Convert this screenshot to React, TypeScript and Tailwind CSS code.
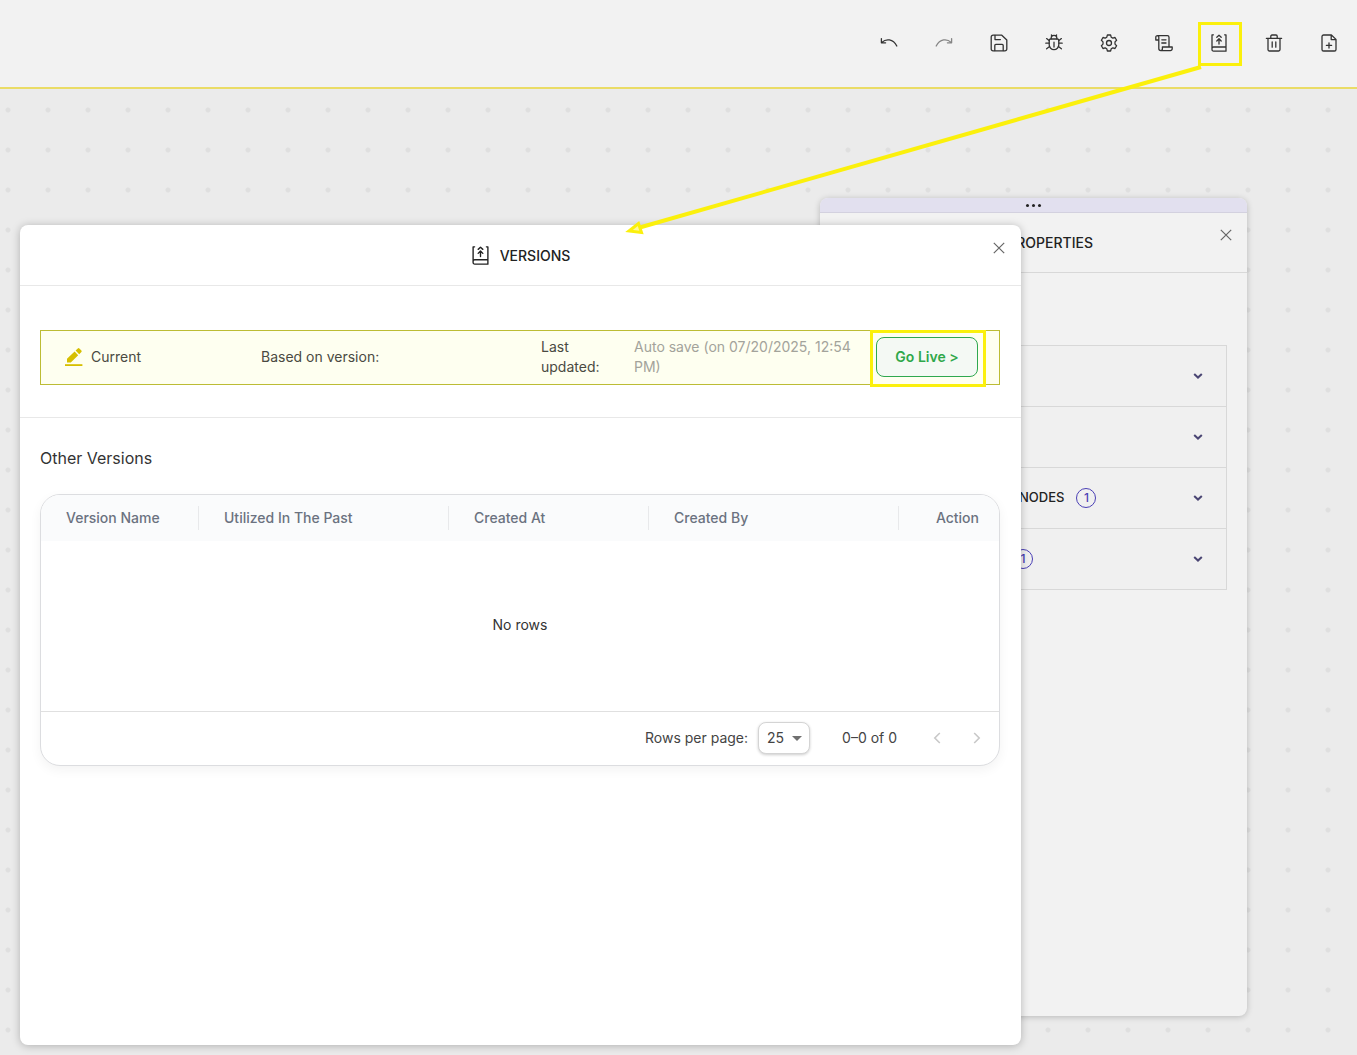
import React from "react";

type IconProps = { className?: string };

function Svg({ className = "size-[18px]", children }: React.PropsWithChildren<IconProps>) {
  return (
    <svg viewBox="0 0 18 18" fill="none" stroke="currentColor" strokeWidth="1.3" strokeLinecap="round" strokeLinejoin="round" className={className} aria-hidden="true">
      {children}
    </svg>
  );
}

const UndoIcon = () => (
  <Svg>
    <path d="M1.4 4.6V8.8H5.6M1.8 8.4C6 4.4 13 4.6 16.8 12" />
  </Svg>
);
const RedoIcon = () => (
  <Svg>
    <path d="M16.6 4.6V8.8H12.4M16.2 8.4C12 4.4 5 4.6 1.2 12" />
  </Svg>
);
const SaveIcon = () => (
  <Svg>
    <path d="M3 1.2H11.8L16.8 6V15A1.8 1.8 0 0 1 15 16.8H3A1.8 1.8 0 0 1 1.2 15V3A1.8 1.8 0 0 1 3 1.2Z" />
    <path d="M5 1.4V5.6H10.4M4.8 16.6V11.4A1 1 0 0 1 5.8 10.4H12.2A1 1 0 0 1 13.2 11.4V16.6" />
  </Svg>
);
const BugIcon = () => (
  <Svg>
    <path d="M6.2 4.8V3.8A2.8 2.4 0 0 1 11.8 3.8V4.8M6.4 1L7.2 2M11.6 1L10.8 2" />
    <path d="M5.4 5H12.6A1.6 1.6 0 0 1 13.8 6.5V10.8A4.8 4.8 0 0 1 4.2 10.8V6.5A1.6 1.6 0 0 1 5.4 5Z" />
    <path d="M9 8.2V13M4.2 9.2H.8M13.8 9.2H17.2M4.4 6.8L1.6 4.6M13.6 6.8L16.4 4.6M4.6 12.6L1.6 14.8M13.4 12.6L16.4 14.8" />
  </Svg>
);
const GearIcon = () => (
  <Svg>
    <path d="M7.4 1H10.6L11.2 3.2L12.8 4.1L15 3.5L16.6 6.3L15 7.9V10.1L16.6 11.7L15 14.5L12.8 13.9L11.2 14.8L10.6 17H7.4L6.8 14.8L5.2 13.9L3 14.5L1.4 11.7L3 10.1V7.9L1.4 6.3L3 3.5L5.2 4.1L6.8 3.2Z" />
    <circle cx="9" cy="9" r="2.5" />
  </Svg>
);
const ScrollIcon = () => (
  <Svg>
    <path d="M3.8 6H.8V3.4A1.6 1.6 0 0 1 2.4 1.6H12.4A1.6 1.6 0 0 1 14 3.2V12.6M2.4 1.6A1.5 1.5 0 0 1 3.8 3.2V14.6A2 2 0 0 0 5.8 16.6H15.4A1.8 1.8 0 0 0 17.2 14.8V13H7.4V14.8A1.7 1.7 0 0 1 5.8 16.6" />
    <path d="M6.8 5.8H11M6.8 9H11" />
  </Svg>
);
const VersionsIcon = ({ className }: IconProps) => (
  <Svg className={className}>
    <path d="M3.4 .8H2V15.4A1.6 1.6 0 0 0 3.6 17.2H16V.8H14.6M2 15A1.6 1.6 0 0 1 3.6 13H16" />
    <path d="M6.8 3.2L9 1.2L11.2 3.2M6.8 7L9 4.8L11.2 7M9 5V10" />
  </Svg>
);
const TrashIcon = () => (
  <Svg>
    <path d="M1.4 4.4H16.6M5.8 4.2V2.2A1.2 1.2 0 0 1 7 1H11A1.2 1.2 0 0 1 12.2 2.2V4.2M3 4.6V15.6A1.4 1.4 0 0 0 4.4 17H13.6A1.4 1.4 0 0 0 15 15.6V4.6M7.2 8V13.2M10.8 8V13.2" />
  </Svg>
);
const FilePlusIcon = () => (
  <Svg>
    <path d="M3.6 1H11.4L16 5.4V15.4A1.6 1.6 0 0 1 14.4 17H3.6A1.6 1.6 0 0 1 2 15.4V2.6A1.6 1.6 0 0 1 3.6 1M11.2 1.2V5.6H15.8M9 8.8V14M6.4 11.4H11.6" />
  </Svg>
);
const CloseIcon = () => (
  <svg viewBox="0 0 12 12" className="size-3" fill="none" stroke="currentColor" strokeWidth="1.2" aria-hidden="true">
    <path d="M.8 .8L11.2 11.2M11.2 .8L.8 11.2" />
  </svg>
);
const PencilIcon = () => (
  <svg viewBox="0 0 18 20" className="h-5 w-[18px] shrink-0" fill="#d6bf00" aria-hidden="true">
    <path d="M2 11.8L9.6 4.6L13.2 8.2L5.8 15.6H2ZM10.6 3.6L12.8 1.4Q13.6 .8 14.4 1.5L16.4 3.5Q17.1 4.2 16.4 5L14.2 7.2Z" />
    <path d="M0 17.2H17.4V19H0Z" />
  </svg>
);
const ChevronIcon = () => (
  <svg viewBox="0 0 10 8" className="h-2 w-2.5" fill="none" stroke="#4a4573" strokeWidth="2" aria-hidden="true">
    <path d="M1.2 2L5 5.6L8.8 2" />
  </svg>
);

const tools = [
  { label: "Undo", Icon: UndoIcon },
  { label: "Redo", Icon: RedoIcon, muted: true },
  { label: "Save", Icon: SaveIcon },
  { label: "Debug", Icon: BugIcon },
  { label: "Settings", Icon: GearIcon },
  { label: "Logs", Icon: ScrollIcon },
  { label: "Versions", Icon: VersionsIcon, highlighted: true },
  { label: "Delete", Icon: TrashIcon },
  { label: "New file", Icon: FilePlusIcon },
];

function Toolbar() {
  return (
    <header className="flex h-[89px] items-center justify-end gap-[15px] border-b-2 border-[#eadc66] bg-[#f2f2f2] pr-2 pb-px">
      {tools.map(({ label, Icon, muted, highlighted }) => (
        <button key={label} type="button" aria-label={label} className={`relative grid size-10 place-items-center ${muted ? "text-[#858585]" : "text-[#333]"}`}>
          <Icon />
          {highlighted && <span className="pointer-events-none absolute -top-px -right-[3px] -bottom-[3px] -left-px border-3 border-[#fbf00c]" />}
        </button>
      ))}
    </header>
  );
}

function Count() {
  return <span className="grid size-5 place-items-center rounded-full border border-[#4a3fb5] text-xs text-[#4a3fb5]">1</span>;
}

function PropertiesPanel() {
  const rows = [
    { name: "Section one", content: null },
    { name: "Section two", content: null },
    {
      name: "Nodes",
      content: (
        <span className="flex items-center gap-3 pl-[178px]">
          NODES
          <Count />
        </span>
      ),
    },
    {
      name: "Section four",
      content: (
        <span className="pl-[172px]">
          <Count />
        </span>
      ),
    },
  ];
  return (
    <aside className="absolute top-[109px] right-[110px] bottom-[39px] w-[427px] overflow-hidden rounded-lg bg-[#f2f2f2] shadow-[0_1px_6px_rgba(0,0,0,0.22)]">
      <div className="flex h-[15px] items-center justify-center gap-[3px] border-b border-[#d3d1df] bg-[#e2e0ef]">
        <i className="size-[3px] rounded-full bg-[#222]" />
        <i className="size-[3px] rounded-full bg-[#222]" />
        <i className="size-[3px] rounded-full bg-[#222]" />
      </div>
      <div className="flex h-[60px] items-center justify-end border-b border-[#d8d8d8] pr-[154px]">
        <h2 className="text-sm font-medium text-[#222]">PROPERTIES</h2>
        <button type="button" aria-label="Close properties" className="absolute top-[31px] right-[15px] text-[#666]">
          <CloseIcon />
        </button>
      </div>
      <div className="mx-5 mt-[72px] border border-b-0 border-[#d8d8d8] bg-[#f0f0f0]">
        {rows.map((row) => (
          <button key={row.name} type="button" aria-label={row.name} className="flex h-[61px] w-full items-center border-b border-[#d8d8d8] pr-[23px] text-[13px] font-medium text-[#222]">
            {row.content}
            <span className="ml-auto">
              <ChevronIcon />
            </span>
          </button>
        ))}
      </div>
    </aside>
  );
}

function CurrentVersion() {
  return (
    <section className="pt-11 pr-[21px] pb-8 pl-5">
      <div className="grid min-h-[55px] grid-cols-[220px_280px_93px_1fr_auto] items-center border border-[#bcbc34] bg-[#fefff0] pr-[21px] pb-px text-sm leading-5 text-[#4a4a42]">
        <span className="flex items-center gap-2 pl-6">
          <PencilIcon />
          Current
        </span>
        <span>Based on version:</span>
        <span className="pr-5">Last updated:</span>
        <span className="pr-2 text-[#a3a39b]">Auto save (on 07/20/2025, 12:54 PM)</span>
        <span className="relative">
          <button type="button" className="h-10 w-[102px] rounded-lg border border-[#2fa84f] bg-[#f4f9f4] text-sm font-semibold text-[#2fa84a]">
            Go Live &gt;
          </button>
          <span className="pointer-events-none absolute -top-[7px] -right-2 -bottom-2.5 -left-1.5 border-3 border-[#fbf00c]" />
        </span>
      </div>
    </section>
  );
}

const columns = [
  { label: "Version Name", width: "w-[158px]" },
  { label: "Utilized In The Past", width: "w-[250px]" },
  { label: "Created At", width: "w-[200px]" },
  { label: "Created By", width: "w-[250px]" },
];

function VersionsTable() {
  return (
    <div className="overflow-hidden rounded-[20px] border border-[#dcdde0] bg-white shadow-[0_4px_12px_rgba(0,0,0,0.05)]">
      <table className="w-full table-fixed text-sm">
        <thead className="h-[46px] bg-[#fafbfc] text-left text-[#6b7280]">
          <tr>
            {columns.map((column) => (
              <th key={column.label} className={`relative pl-[25px] font-medium ${column.width}`}>
                {column.label}
                <span className="absolute top-[11px] right-0 bottom-[11px] border-r border-[#e8e9eb]" />
              </th>
            ))}
            <th className="pr-5 text-right font-medium">Action</th>
          </tr>
        </thead>
        <tbody>
          <tr>
            <td colSpan={5} className="h-[170px] pb-0.5 text-center text-[#333]">
              No rows
            </td>
          </tr>
        </tbody>
      </table>
      <div className="flex h-[54px] items-center justify-end border-t border-[#e0e0e0] pr-3 pb-0.5 text-sm text-[#444]">
        <label htmlFor="page-size">Rows per page:</label>
        <span className="relative ml-2.5">
          <select id="page-size" defaultValue="25" className="h-8 w-[52px] appearance-none rounded-lg border border-[#d4d4d4] bg-white pl-2 text-sm shadow-[0_1px_3px_rgba(0,0,0,0.2)]">
            <option>25</option>
            <option>50</option>
            <option>100</option>
          </select>
          <svg viewBox="0 0 10 5" className="pointer-events-none absolute top-3.5 right-2 h-[5px] w-2.5" fill="#707070" aria-hidden="true">
            <path d="M0 0H10L5 5Z" />
          </svg>
        </span>
        <span className="ml-8">0–0 of 0</span>
        <button type="button" disabled aria-label="Previous page" className="ml-[30px] grid size-5 place-items-center text-[#c8c8c8]">
          <svg viewBox="0 0 8 12" className="h-3 w-2" fill="none" stroke="currentColor" strokeWidth="1.6">
            <path d="M6.8 1L1.8 6L6.8 11" />
          </svg>
        </button>
        <button type="button" disabled aria-label="Next page" className="ml-5 grid size-5 place-items-center text-[#c8c8c8]">
          <svg viewBox="0 0 8 12" className="h-3 w-2" fill="none" stroke="currentColor" strokeWidth="1.6">
            <path d="M1.2 1L6.2 6L1.2 11" />
          </svg>
        </button>
      </div>
    </div>
  );
}

function VersionsDialog() {
  return (
    <section role="dialog" aria-labelledby="versions-title" className="absolute top-[136px] right-[336px] bottom-2.5 left-5 rounded-lg bg-white shadow-[0_1px_8px_rgba(0,0,0,0.25)]">
      <div className="flex h-[61px] items-center justify-center gap-2.5 border-b border-[#e8e8e8] pt-px text-[#222]">
        <VersionsIcon className="size-[19px]" />
        <h2 id="versions-title" className="text-sm font-medium">
          VERSIONS
        </h2>
        <button type="button" aria-label="Close versions" className="absolute top-[17px] right-4 text-[#666]">
          <CloseIcon />
        </button>
      </div>
      <CurrentVersion />
      <div className="border-t border-[#e8e8e8] pt-7 pr-[21px] pl-5">
        <h3 className="mb-6 text-base text-[#333]">Other Versions</h3>
        <VersionsTable />
      </div>
    </section>
  );
}

export default function App() {
  return (
    <div className="relative flex min-h-screen flex-col overflow-hidden font-[Inter,sans-serif]">
      <Toolbar />
      <main className="relative min-h-[840px] flex-1 bg-[#ebebeb] bg-[radial-gradient(circle,#dfdfdf_2px,transparent_3px)] bg-[size:40px_40px] bg-[position:-12px_1px]">
        <PropertiesPanel />
        <VersionsDialog />
      </main>
      <svg viewBox="0 0 580 172" className="pointer-events-none absolute top-[65px] right-[153px] h-[172px] w-[580px]" fill="none" stroke="#fbf00c" aria-hidden="true">
        <path d="M577 2L14 163" strokeWidth="4" />
        <path d="M5 166L14.5 158.5L17.5 167.5Z" strokeWidth="3" fill="#fdf8a0" />
      </svg>
    </div>
  );
}
